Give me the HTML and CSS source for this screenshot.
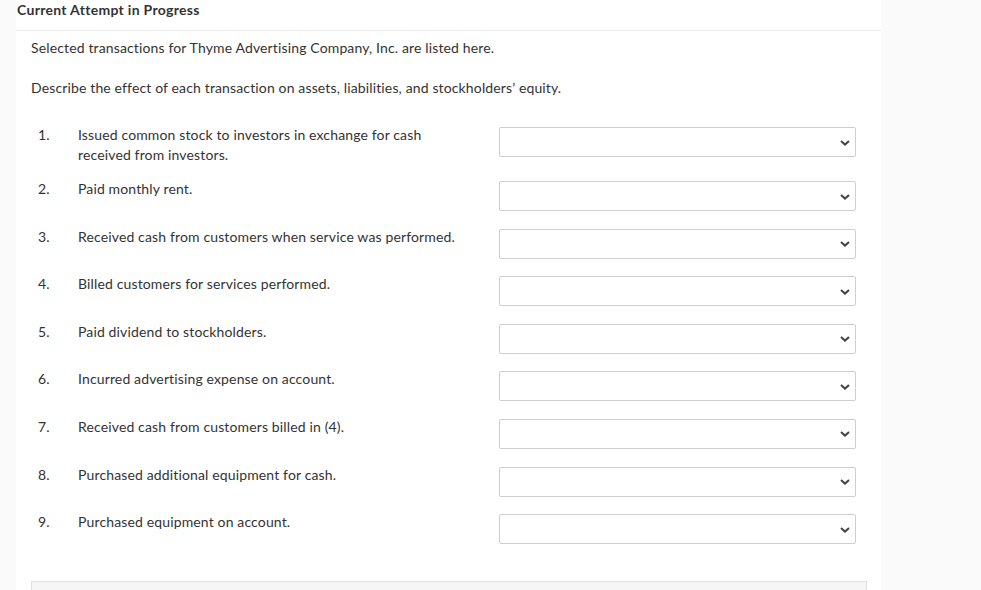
FILE: index.html
```html
<!DOCTYPE html>
<html>

<head>
    <meta charset="utf-8" />
    <title>Current Attempt in Progress</title>
    <link rel="stylesheet" href="styles.css">
</head>

<body>
    <div class="panel">
        <div class="attempt">Current Attempt in Progress</div>
        <div class="question">
            <p>Selected transactions for Thyme Advertising Company, Inc. are listed here.</p>
            <p>Describe the effect of each transaction on assets, liabilities, and stockholders&rsquo; equity.</p>
            <div class="items">
                <div class="item">
                    <span class="num">1.</span>
                    <span class="text">Issued common stock to investors in exchange for cash received from investors.</span>
                    <div class="select"><svg width="10" height="6" viewBox="0 0 10 6"><polyline points="1,1 5,4.6 9,1" /></svg></div>
                </div>
                <div class="item">
                    <span class="num">2.</span>
                    <span class="text">Paid monthly rent.</span>
                    <div class="select"><svg width="10" height="6" viewBox="0 0 10 6"><polyline points="1,1 5,4.6 9,1" /></svg></div>
                </div>
                <div class="item">
                    <span class="num">3.</span>
                    <span class="text">Received cash from customers when service was performed.</span>
                    <div class="select"><svg width="10" height="6" viewBox="0 0 10 6"><polyline points="1,1 5,4.6 9,1" /></svg></div>
                </div>
                <div class="item">
                    <span class="num">4.</span>
                    <span class="text">Billed customers for services performed.</span>
                    <div class="select"><svg width="10" height="6" viewBox="0 0 10 6"><polyline points="1,1 5,4.6 9,1" /></svg></div>
                </div>
                <div class="item">
                    <span class="num">5.</span>
                    <span class="text">Paid dividend to stockholders.</span>
                    <div class="select"><svg width="10" height="6" viewBox="0 0 10 6"><polyline points="1,1 5,4.6 9,1" /></svg></div>
                </div>
                <div class="item">
                    <span class="num">6.</span>
                    <span class="text">Incurred advertising expense on account.</span>
                    <div class="select"><svg width="10" height="6" viewBox="0 0 10 6"><polyline points="1,1 5,4.6 9,1" /></svg></div>
                </div>
                <div class="item">
                    <span class="num">7.</span>
                    <span class="text">Received cash from customers billed in (4).</span>
                    <div class="select"><svg width="10" height="6" viewBox="0 0 10 6"><polyline points="1,1 5,4.6 9,1" /></svg></div>
                </div>
                <div class="item">
                    <span class="num">8.</span>
                    <span class="text">Purchased additional equipment for cash.</span>
                    <div class="select"><svg width="10" height="6" viewBox="0 0 10 6"><polyline points="1,1 5,4.6 9,1" /></svg></div>
                </div>
                <div class="item">
                    <span class="num">9.</span>
                    <span class="text">Purchased equipment on account.</span>
                    <div class="select"><svg width="10" height="6" viewBox="0 0 10 6"><polyline points="1,1 5,4.6 9,1" /></svg></div>
                </div>
            </div>
            <div class="footer-box"></div>
        </div>
    </div>
</body>

</html>
```

FILE: styles.css
```css
* {
    box-sizing: border-box;
}

body {
    margin: 0;
    background-color: #fafafa;
    font-family: Lato, "Open Sans", sans-serif;
    font-size: 14px;
    letter-spacing: 0.14px;
    line-height: 20px;
    color: #333;
    height: 590px;
    overflow: hidden;
}

.panel {
    margin-left: 16px;
    width: 865px;
    min-height: 590px;
    background-color: #fff;
}

.attempt {
    font-weight: bold;
    letter-spacing: 0.3px;
    padding: 0 0 10px 1px;
    border-bottom: 1px solid #ececec;
}

.question {
    padding: 7px 14px 0 15px;
}

.question p {
    margin: 0 0 20px;
}

.items {
    display: flex;
    flex-direction: column;
    gap: 14px;
    margin-top: 27px;
    padding: 0 11px 0 7px;
}

.item {
    display: grid;
    grid-template-columns: 40px 1fr 357px;
    align-items: start;
    min-height: 33.6px;
}

.text {
    padding-right: 36px;
}

.select {
    margin-top: 2px;
    height: 30px;
    border: 1px solid #cfcfcf;
    border-radius: 2px;
    display: flex;
    align-items: center;
    justify-content: flex-end;
    padding: 1px 5px 0 0;
}

.select polyline {
    fill: none;
    stroke: #444;
    stroke-width: 2;
}

.footer-box {
    margin-top: 35px;
    height: 30px;
    background-color: #f6f6f6;
    border: 1px solid #e0e0e0;
}
```
